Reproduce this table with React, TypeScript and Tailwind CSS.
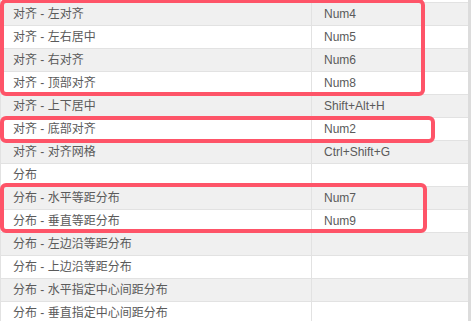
import React from "react";

const rows: [string, string][] = [
  ["对齐 - 左对齐", "Num4"],
  ["对齐 - 左右居中", "Num5"],
  ["对齐 - 右对齐", "Num6"],
  ["对齐 - 顶部对齐", "Num8"],
  ["对齐 - 上下居中", "Shift+Alt+H"],
  ["对齐 - 底部对齐", "Num2"],
  ["对齐 - 对齐网格", "Ctrl+Shift+G"],
  ["分布", ""],
  ["分布 - 水平等距分布", "Num7"],
  ["分布 - 垂直等距分布", "Num9"],
  ["分布 - 左边沿等距分布", ""],
  ["分布 - 上边沿等距分布", ""],
  ["分布 - 水平指定中心间距分布", ""],
  ["分布 - 垂直指定中心间距分布", ""],
];

const App = () => {
  return (
    <div
      className="relative w-[471px] h-[321px] overflow-hidden bg-white flex text-[12px] text-[#5a5a5a]"
      style={{ fontFamily: '"Liberation Sans", "Noto Sans CJK SC", sans-serif' }}
    >
      <div className="w-[468px] flex flex-col border-l border-[#e2e2e2]">
        <div className="h-[3px] shrink-0 bg-white border-b border-[#e2e2e2]" />
        {rows.map(([name, key], i) => (
          <div
            key={name}
            className={`flex h-[23px] shrink-0 border-b border-[#e2e2e2] ${
              i % 2 === 0 ? "bg-[#f0f0f0]" : "bg-white"
            }`}
          >
            <div className="w-[311px] shrink-0 border-r border-[#e2e2e2] pl-3 flex items-center">
              {name}
            </div>
            <div className="flex-1 pl-3 flex items-center">{key}</div>
          </div>
        ))}
      </div>
      <div className="w-[3px] bg-[#dcdcdc]" />

      {/* highlight boxes */}
      <div className="absolute left-0 top-[-1px] w-[425px] h-[97px] border-[4px] border-[#fe5468] rounded-[6px]" />
      <div className="absolute left-0 top-[116px] w-[435px] h-[27px] border-[4px] border-[#fe5468] rounded-[6px]" />
      <div className="absolute left-0 top-[183px] w-[427px] h-[50px] border-[4px] border-[#fe5468] rounded-[6px]" />
    </div>
  );
};

export default App;
